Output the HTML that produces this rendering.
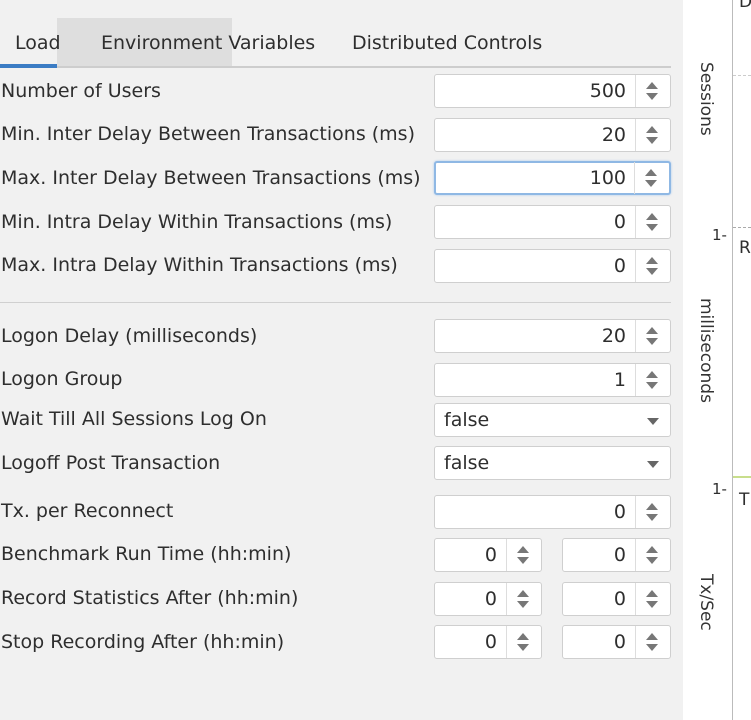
<!DOCTYPE html>
<html><head><style>
body{margin:0;width:751px;height:720px;overflow:hidden;background:#fff;font-family:"DejaVu Sans","Liberation Sans",sans-serif;color:#2e2e2e;position:relative}
.p{position:absolute;left:0;top:0;width:683px;height:720px;background:#f1f1f1}
.t{position:absolute;font-size:19px;white-space:nowrap}
.lab{position:absolute;left:1px;font-size:19px;white-space:nowrap;line-height:22px}
.in{position:absolute;background:#fff;border:1px solid #cfcfcf;border-radius:3px;box-sizing:border-box;height:34px}
.in .v{position:absolute;right:44px;top:5px;font-size:19px}
.sp{position:absolute;right:0;top:0;width:34px;height:32px;border-left:1px solid #ddd}
.sp:before{content:"";position:absolute;left:10px;top:7px;border:6px solid transparent;border-bottom:7px solid #777;border-top:0}
.sp:after{content:"";position:absolute;left:10px;top:18px;border:6px solid transparent;border-top:7px solid #777;border-bottom:0}
.cb .v{left:9px;right:auto}
.cb:after{content:"";position:absolute;right:11px;top:14px;border:6px solid transparent;border-top:7px solid #666;border-bottom:0}
.rot{position:absolute;transform:rotate(90deg);transform-origin:left top;font-size:17px;color:#333;white-space:nowrap}
</style></head><body>
<div class="p"></div>
<div style="position:absolute;left:57px;top:18px;width:175px;height:49px;background:#dedede"></div>
<div style="position:absolute;left:0;top:66px;width:671px;height:2px;background:#cdcdcd"></div>
<div style="position:absolute;left:0;top:64px;width:57px;height:4px;background:#3b7cc4"></div>
<div class="t" style="left:15px;top:32px">Load</div>
<div class="t" style="left:101px;top:32px">Environment Variables</div>
<div class="t" style="left:352px;top:32px">Distributed Controls</div>
<div style="position:absolute;left:0;top:302px;width:671px;height:1px;background:#d0d0d0"></div>

<div class="lab" style="top:80px">Number of Users</div>
<div class="lab" style="top:123px">Min. Inter Delay Between Transactions (ms)</div>
<div class="lab" style="top:167px">Max. Inter Delay Between Transactions (ms)</div>
<div class="lab" style="top:211px">Min. Intra Delay Within Transactions (ms)</div>
<div class="lab" style="top:254px">Max. Intra Delay Within Transactions (ms)</div>
<div class="lab" style="top:325px">Logon Delay (milliseconds)</div>
<div class="lab" style="top:368px">Logon Group</div>
<div class="lab" style="top:408px">Wait Till All Sessions Log On</div>
<div class="lab" style="top:452px">Logoff Post Transaction</div>
<div class="lab" style="top:500px">Tx. per Reconnect</div>
<div class="lab" style="top:543px">Benchmark Run Time (hh:min)</div>
<div class="lab" style="top:587px">Record Statistics After (hh:min)</div>
<div class="lab" style="top:631px">Stop Recording After (hh:min)</div>

<div class="in" style="left:434px;top:74px;width:237px"><span class="v">500</span><div class="sp"></div></div>
<div class="in" style="left:434px;top:118px;width:237px"><span class="v">20</span><div class="sp"></div></div>
<div class="in" style="left:434px;top:161px;width:237px;border:2px solid #8fb8e4;box-shadow:0 0 2px #a9c9ee"><span class="v" style="right:43px;top:4px">100</span><div class="sp" style="top:-1px"></div></div>
<div class="in" style="left:434px;top:205px;width:237px"><span class="v">0</span><div class="sp"></div></div>
<div class="in" style="left:434px;top:249px;width:237px"><span class="v">0</span><div class="sp"></div></div>
<div class="in" style="left:434px;top:319px;width:237px"><span class="v">20</span><div class="sp"></div></div>
<div class="in" style="left:434px;top:363px;width:237px"><span class="v">1</span><div class="sp"></div></div>
<div class="in cb" style="left:434px;top:403px;width:237px"><span class="v">false</span></div>
<div class="in cb" style="left:434px;top:446px;width:237px"><span class="v">false</span></div>
<div class="in" style="left:434px;top:495px;width:237px"><span class="v">0</span><div class="sp"></div></div>
<div class="in" style="left:434px;top:538px;width:108px"><span class="v">0</span><div class="sp"></div></div>
<div class="in" style="left:562px;top:538px;width:109px"><span class="v">0</span><div class="sp"></div></div>
<div class="in" style="left:434px;top:582px;width:108px"><span class="v">0</span><div class="sp"></div></div>
<div class="in" style="left:562px;top:582px;width:109px"><span class="v">0</span><div class="sp"></div></div>
<div class="in" style="left:434px;top:625px;width:108px"><span class="v">0</span><div class="sp"></div></div>
<div class="in" style="left:562px;top:625px;width:109px"><span class="v">0</span><div class="sp"></div></div>

<div style="position:absolute;left:732px;top:0;width:1px;height:720px;background:#bbb"></div>
<div class="rot" style="left:716px;top:62px">Sessions</div>
<div class="rot" style="left:716px;top:298px">milliseconds</div>
<div class="rot" style="left:716px;top:574px">Tx/Sec</div>
<div class="t" style="left:739px;top:-8px;font-size:17px">D</div>
<div class="t" style="left:739px;top:238px;font-size:17px">R</div>
<div class="t" style="left:739px;top:490px;font-size:17px">T</div>
<div class="t" style="left:712px;top:226px;font-size:15px">1-</div>
<div class="t" style="left:712px;top:480px;font-size:15px">1-</div>
<div style="position:absolute;left:733px;top:227px;width:18px;border-top:1px dashed #aaa"></div>
<div style="position:absolute;left:733px;top:75px;width:18px;border-top:1px dashed #ccc"></div>
<div style="position:absolute;left:733px;top:476px;width:18px;height:2px;background:#c8de8c"></div>
</body></html>
